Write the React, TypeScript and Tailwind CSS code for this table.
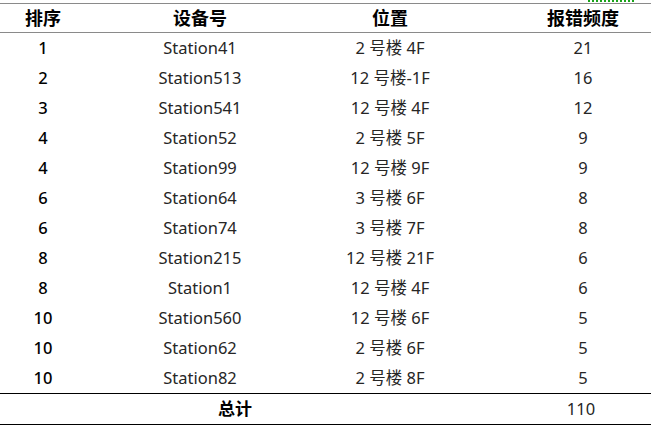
import React from "react";

type Row = { rank: string; device: string; place: string; count: string };

const rows: Row[] = [
  { rank: "1", device: "Station41", place: "2 号楼 4F", count: "21" },
  { rank: "2", device: "Station513", place: "12 号楼-1F", count: "16" },
  { rank: "3", device: "Station541", place: "12 号楼 4F", count: "12" },
  { rank: "4", device: "Station52", place: "2 号楼 5F", count: "9" },
  { rank: "4", device: "Station99", place: "12 号楼 9F", count: "9" },
  { rank: "6", device: "Station64", place: "3 号楼 6F", count: "8" },
  { rank: "6", device: "Station74", place: "3 号楼 7F", count: "8" },
  { rank: "8", device: "Station215", place: "12 号楼 21F", count: "6" },
  { rank: "8", device: "Station1", place: "12 号楼 4F", count: "6" },
  { rank: "10", device: "Station560", place: "12 号楼 6F", count: "5" },
  { rank: "10", device: "Station62", place: "2 号楼 6F", count: "5" },
  { rank: "10", device: "Station82", place: "2 号楼 8F", count: "5" },
];

const cols = "grid grid-cols-[86px_228px_152px_185px]";

export default function App() {
  return (
    <div
      className="w-[651px] h-[429px] bg-white text-[16.5px] text-[#262626]"
      style={{ fontFamily: '"Noto Sans", "Noto Sans CJK SC", sans-serif' }}
    >
      <div className="flex h-[3px] justify-end pr-[17px]">
        <div className="w-[46px] border-t-2 border-dotted border-[#1aa31a]" />
      </div>
      <div className="border-t border-[#8a8a8a]">
        <div className={`${cols} h-[29px] items-center text-[18px] font-bold text-black border-b border-[#8a8a8a]`}>
          <div className="text-center">排序</div>
          <div className="text-center">设备号</div>
          <div className="text-center">位置</div>
          <div className="text-center pl-[49px]">报错频度</div>
        </div>
        {rows.map((r, i) => (
          <div key={i} className={`${cols} h-[30px] items-center`}>
            <div className="text-center font-medium text-black">{r.rank}</div>
            <div className="text-center">{r.device}</div>
            <div className="text-center">{r.place}</div>
            <div className="text-center pl-[49px]">{r.count}</div>
          </div>
        ))}
        <div className={`${cols} h-[32px] items-center border-t border-b border-black`}>
          <div className="col-span-3 text-center text-[17px] font-bold text-black pl-[4px]">总计</div>
          <div className="text-center pl-[45px]">110</div>
        </div>
      </div>
    </div>
  );
}
